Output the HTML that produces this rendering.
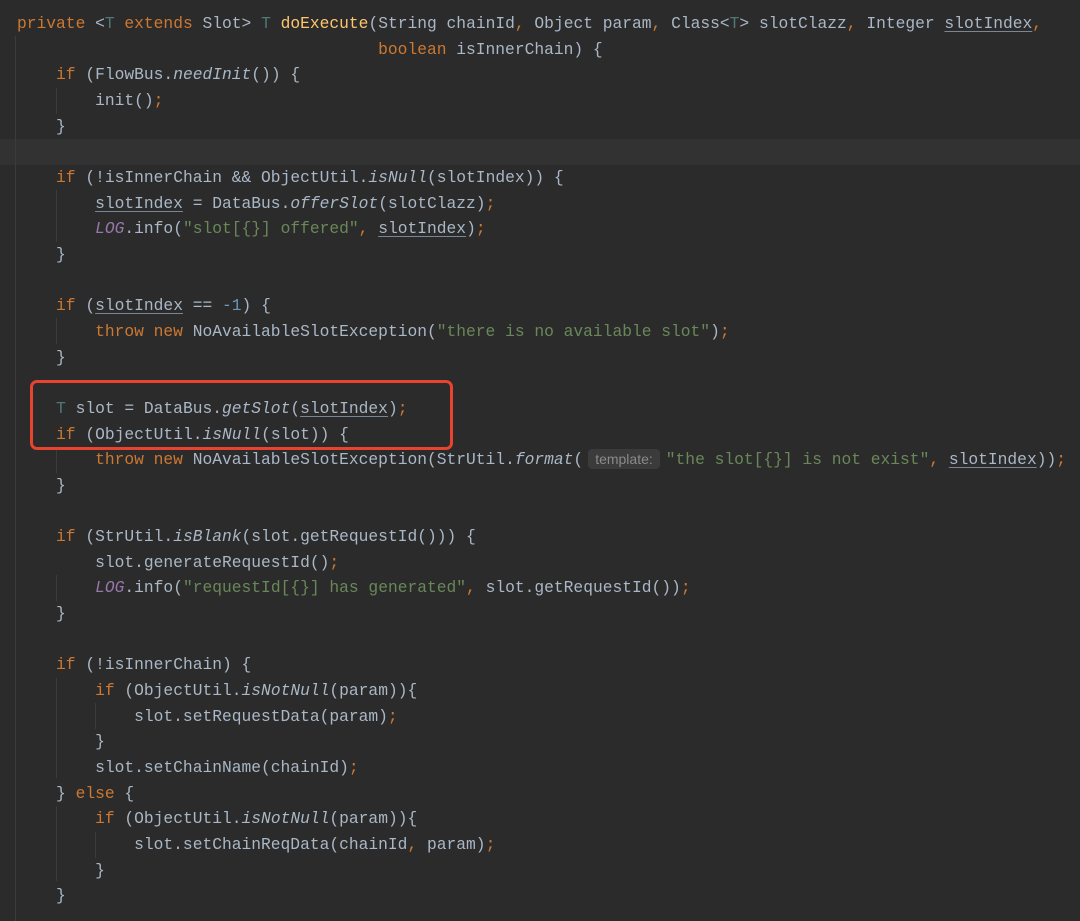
<!DOCTYPE html>
<html><head><meta charset="utf-8"><style>
html,body{margin:0;padding:0;background:#2b2b2b;width:1080px;height:921px;overflow:hidden}
.c{position:absolute;left:17px;top:11px;font-family:"Liberation Mono",monospace;font-size:16.28px;line-height:25.65px;color:#a9b7c6;white-space:pre}
.k{color:#cc7832}.s{color:#6a8759}.m{color:#ffc66d}.t{color:#507874}.i{font-style:italic}.l{color:#9876aa;font-style:italic}.n{color:#6897bb}
.u{text-decoration:underline;text-decoration-color:#7a8696;text-underline-offset:3px}
.hl{position:absolute;left:0;top:139px;width:1080px;height:26px;background:#323232}
.g{position:absolute;width:1px;background:#3b3b3b}
.box{position:absolute;left:30px;top:380px;width:417px;height:64px;border:3px solid #e8432e;border-radius:7px}
.hint{background:#3b3b3b;color:#8a8a8a;font-family:"Liberation Sans",sans-serif;font-size:14px;border-radius:4px;padding:2px 7px;margin:0 6px 0 5px}
</style></head><body>
<div class="hl"></div>
<div class="g" style="left:15px;top:36px;height:885px"></div>
<div class="g" style="left:56px;top:88px;height:26px"></div>
<div class="g" style="left:56px;top:190px;height:52px"></div>
<div class="g" style="left:56px;top:318px;height:26px"></div>
<div class="g" style="left:56px;top:447px;height:26px"></div>
<div class="g" style="left:56px;top:575px;height:26px"></div>
<div class="g" style="left:56px;top:678px;height:100px"></div>
<div class="g" style="left:95px;top:703px;height:26px"></div>
<div class="g" style="left:56px;top:806px;height:75px"></div>
<div class="g" style="left:95px;top:832px;height:26px"></div>
<div class="c"><span class="k">private </span>&lt;<span class="t">T</span> <span class="k">extends </span>Slot&gt; <span class="t">T</span> <span class="m">doExecute</span>(String chainId<span class="k">, </span>Object param<span class="k">, </span>Class&lt;<span class="t">T</span>&gt; slotClazz<span class="k">, </span>Integer <span class="u">slotIndex</span><span class="k">,</span>
                                     <span class="k">boolean </span>isInnerChain) {
    <span class="k">if </span>(FlowBus.<span class="i">needInit</span>()) {
        init()<span class="k">;</span>
    }

    <span class="k">if </span>(!isInnerChain &amp;&amp; ObjectUtil.<span class="i">isNull</span>(slotIndex)) {
        <span class="u">slotIndex</span> = DataBus.<span class="i">offerSlot</span>(slotClazz)<span class="k">;</span>
        <span class="l">LOG</span>.info(<span class="s">"slot[{}] offered"</span><span class="k">, </span><span class="u">slotIndex</span>)<span class="k">;</span>
    }

    <span class="k">if </span>(<span class="u">slotIndex</span> == <span class="n">-1</span>) {
        <span class="k">throw new </span>NoAvailableSlotException(<span class="s">"there is no available slot"</span>)<span class="k">;</span>
    }

    <span class="t">T</span> slot = DataBus.<span class="i">getSlot</span>(<span class="u">slotIndex</span>)<span class="k">;</span>
    <span class="k">if </span>(ObjectUtil.<span class="i">isNull</span>(slot)) {
        <span class="k">throw new </span>NoAvailableSlotException(StrUtil.<span class="i">format</span>(<span class="hint">template:</span><span class="s">"the slot[{}] is not exist"</span><span class="k">, </span><span class="u">slotIndex</span>))<span class="k">;</span>
    }

    <span class="k">if </span>(StrUtil.<span class="i">isBlank</span>(slot.getRequestId())) {
        slot.generateRequestId()<span class="k">;</span>
        <span class="l">LOG</span>.info(<span class="s">"requestId[{}] has generated"</span><span class="k">, </span>slot.getRequestId())<span class="k">;</span>
    }

    <span class="k">if </span>(!isInnerChain) {
        <span class="k">if </span>(ObjectUtil.<span class="i">isNotNull</span>(param)){
            slot.setRequestData(param)<span class="k">;</span>
        }
        slot.setChainName(chainId)<span class="k">;</span>
    } <span class="k">else </span>{
        <span class="k">if </span>(ObjectUtil.<span class="i">isNotNull</span>(param)){
            slot.setChainReqData(chainId<span class="k">, </span>param)<span class="k">;</span>
        }
    }</div>
<div class="box"></div>
</body></html>
